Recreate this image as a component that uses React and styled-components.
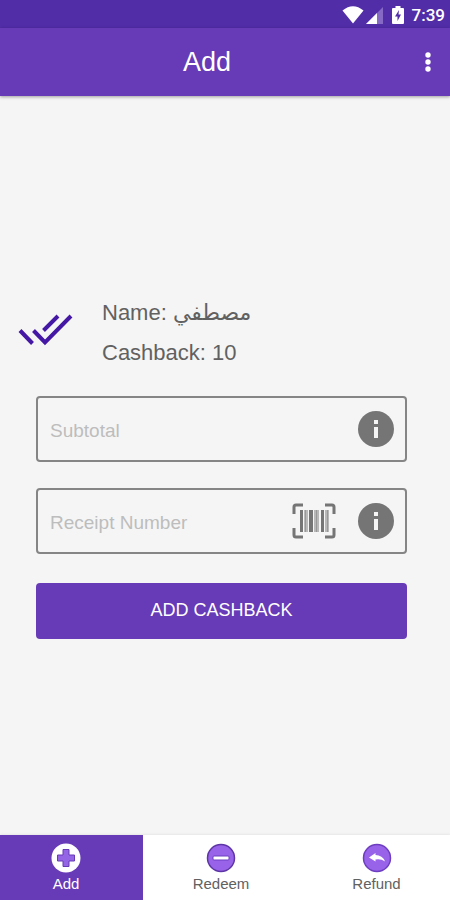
import React from "react";
import styled, { createGlobalStyle } from "styled-components";

const GlobalStyle = createGlobalStyle`
  *, *::before, *::after { box-sizing: border-box; }
  body { margin: 0; background: #f5f5f5; }
  button, input { font: inherit; }
`;

const Screen = styled.div`
  display: flex;
  flex-direction: column;
  min-height: 100vh;
  background: #f5f5f5;
  color: #616161;
  font-family: "Liberation Sans", Arial, "DejaVu Sans", sans-serif;
`;

const StatusBar = styled.div`
  display: flex;
  align-items: center;
  justify-content: flex-end;
  height: 28px;
  padding: 2px 5px 0 0;
  background: #512da8;
  color: #fff;
`;

const StatusIcon = styled.svg`
  display: block;
  margin-right: ${(p) => p.$gap}px;
`;

const Clock = styled.span`
  font: 500 17px/24px Roboto, sans-serif;
`;

const AppBar = styled.header`
  display: flex;
  align-items: center;
  height: 68px;
  background: #673ab7;
  color: #fff;
  box-shadow: 0 1px 3px rgba(0, 0, 0, 0.35);
`;

const Title = styled.h1`
  flex: 1;
  margin: 0;
  padding-left: 8px;
  font-size: 27px;
  line-height: 32px;
  font-weight: 400;
  text-align: center;
`;

const IconButton = styled.button`
  display: flex;
  flex: none;
  align-items: center;
  justify-content: center;
  width: ${(p) => p.$width}px;
  height: 44px;
  padding: 0;
  border: 0;
  background: none;
  color: inherit;
  cursor: pointer;
`;

const Main = styled.main`
  display: flex;
  flex: 1;
  flex-direction: column;
  justify-content: center;
`;

const Customer = styled.section`
  display: flex;
  align-items: center;
  gap: 28px;
  padding: 0 18px;
`;

const CheckMark = styled.svg`
  flex: none;
  margin-bottom: 6px;
`;

const Details = styled.div`
  font-size: 22px;
  line-height: 40px;
`;

const Detail = styled.p`
  margin: 0;
`;

const ArabicName = styled.bdi`
  font-family: "DejaVu Sans", sans-serif;
  font-size: 22px;
  line-height: 24px;
`;

const Form = styled.form`
  display: flex;
  flex-direction: column;
  gap: 26px;
  padding: 23px 43px 0 36px;
`;

const Field = styled.div`
  display: flex;
  align-items: center;
  height: 66px;
  padding: 0 6px 0 12px;
  border: 2px solid #858585;
  border-radius: 4px;
  color: #757575;
`;

const Input = styled.input`
  flex: 1;
  min-width: 0;
  height: 44px;
  padding: 4px 0 0;
  border: 0;
  outline: 0;
  background: none;
  color: #616161;
  font-size: 19px;
  &::placeholder {
    color: #bdbdbd;
    opacity: 1;
  }
`;

const Submit = styled.button`
  height: 56px;
  margin-top: 3px;
  border: 0;
  border-radius: 4px;
  background: #673ab7;
  color: #fff;
  font-size: 18px;
  cursor: pointer;
`;

const Tabs = styled.nav`
  display: grid;
  grid-template-columns: 143fr 156fr 151fr;
  height: 65px;
  background: #fff;
  box-shadow: 0 -1px 2px rgba(0, 0, 0, 0.06);
`;

const Tab = styled.a`
  display: flex;
  flex-direction: column;
  align-items: center;
  padding: 8px ${(p) => (p.$active ? 11 : 0)}px 0 ${(p) => p.$inset || 0}px;
  background: ${(p) => (p.$active ? "#673ab7" : "#fff")};
  color: ${(p) => (p.$active ? "#fff" : "#616161")};
  font-size: 15px;
  line-height: 22px;
  text-decoration: none;
`;

const WifiIcon = () => (
  <StatusIcon $gap={2} width="22" height="18" viewBox="0 0 22 18" aria-hidden="true">
    <path d="M0.5 4.5Q11-4 21.5 4.5L11 17.5Z" fill="#fff" />
  </StatusIcon>
);

const SignalIcon = () => (
  <StatusIcon $gap={9} width="17" height="17" viewBox="0 0 17 17" aria-hidden="true">
    <path d="M0 17L17 0V17Z" fill="#8669c5" />
    <path d="M0 17L11 6V17Z" fill="#fff" />
  </StatusIcon>
);

const BatteryIcon = () => (
  <StatusIcon $gap={8} width="12" height="18" viewBox="0 0 12 18" aria-hidden="true">
    <path d="M3.5 0h5v2H11q1 0 1 1v14q0 1-1 1H1q-1 0-1-1V3q0-1 1-1h2.500Z" fill="#fff" />
    <path d="M7 4L3 10.500H5.500V15L9 8.500H6.500Z" fill="#512da8" />
  </StatusIcon>
);

const MoreIcon = () => (
  <svg width="6" height="20" viewBox="0 0 6 20" fill="currentColor" aria-hidden="true">
    <circle cx="3" cy="3" r="2.700" />
    <circle cx="3" cy="10" r="2.700" />
    <circle cx="3" cy="17" r="2.700" />
  </svg>
);

const DoubleCheck = () => (
  <CheckMark width="56" height="34" viewBox="0 0 56 34" fill="none" stroke="#4517a5" strokeWidth="4" aria-hidden="true">
    <path d="M2 17.500L14.500 30.500M15.500 17.500L27 29.500L53 3M25.500 17.500L40 3" />
  </CheckMark>
);

const InfoIcon = () => (
  <svg width="36" height="36" viewBox="0 0 36 36" aria-hidden="true">
    <circle cx="18" cy="18" r="18" fill="currentColor" />
    <path d="M16 9h4v4h-4zM16 16h4v11h-4z" fill="#f5f5f5" />
  </svg>
);

const BarcodeIcon = () => (
  <svg width="44" height="36" viewBox="0 0 44 36" fill="none" aria-hidden="true">
    <path
      d="M11 2H4Q2 2 2 4V11M33 2H40Q42 2 42 4V11M2 25V32Q2 34 4 34H11M42 25V32Q42 34 40 34H33"
      stroke="currentColor"
      strokeWidth="3"
    />
    <path d="M12 7h2v22h-2zM14 7h2v22h-2zM22 7h3v22h-3zM25 7h2v22h-2zM33 7h4v22h-4z" fill="#b8b8b8" />
    <path d="M8 7h3v22H8zM17 7h4v22h-4zM29 7h3v22h-3z" fill="#757575" />
    <path d="M13 7h1v22h-1zM24 7h1v22h-1zM35 7h1v22h-1z" fill="#989898" />
  </svg>
);

const AddIcon = () => (
  <svg width="30" height="30" viewBox="0 0 30 30" aria-hidden="true">
    <circle cx="15" cy="15" r="14.500" fill="#fff" />
    <path d="M12 6.500h6V12h5.500v6H18v5.500h-6V18H6.500v-6H12z" fill="#9465e4" stroke="#673ab7" />
  </svg>
);

const RedeemIcon = () => (
  <svg width="30" height="30" viewBox="0 0 30 30" aria-hidden="true">
    <circle cx="15" cy="15" r="13.500" fill="#9863e8" stroke="#5e35a6" strokeWidth="1.500" />
    <rect x="7" y="13" width="16" height="4" rx="1" fill="#fff" stroke="#6d3fc0" />
  </svg>
);

const RefundIcon = () => (
  <svg width="30" height="30" viewBox="0 0 30 30" aria-hidden="true">
    <circle cx="15" cy="15" r="13.500" fill="#9863e8" stroke="#6d3fc0" strokeWidth="1.500" />
    <path d="M7 14.500L13.500 10V12Q20.500 12 23 18.500Q19 15.500 13.500 16.500V18.500Z" fill="#fff" />
  </svg>
);

export default function App() {
  return (
    <Screen>
      <GlobalStyle />
      <StatusBar>
        <WifiIcon />
        <SignalIcon />
        <BatteryIcon />
        <Clock>7:39</Clock>
      </StatusBar>
      <AppBar>
        <Title>Add</Title>
        <IconButton type="button" aria-label="More options" $width={44}>
          <MoreIcon />
        </IconButton>
      </AppBar>
      <Main>
        <Customer>
          <DoubleCheck />
          <Details>
            <Detail>
              Name: <ArabicName lang="ar">مصطفي</ArabicName>
            </Detail>
            <Detail>Cashback: 10</Detail>
          </Details>
        </Customer>
        <Form onSubmit={(e) => e.preventDefault()}>
          <Field>
            <Input aria-label="Subtotal" placeholder="Subtotal" inputMode="decimal" />
            <IconButton type="button" aria-label="About subtotal" $width={46}>
              <InfoIcon />
            </IconButton>
          </Field>
          <Field>
            <Input aria-label="Receipt Number" placeholder="Receipt Number" />
            <IconButton type="button" aria-label="Scan barcode" $width={78}>
              <BarcodeIcon />
            </IconButton>
            <IconButton type="button" aria-label="About receipt number" $width={46}>
              <InfoIcon />
            </IconButton>
          </Field>
          <Submit type="submit">ADD CASHBACK</Submit>
        </Form>
      </Main>
      <Tabs aria-label="Main">
        <Tab href="#add" $active aria-current="page">
          <AddIcon />
          Add
        </Tab>
        <Tab href="#redeem">
          <RedeemIcon />
          Redeem
        </Tab>
        <Tab href="#refund" $inset={4}>
          <RefundIcon />
          Refund
        </Tab>
      </Tabs>
    </Screen>
  );
}
